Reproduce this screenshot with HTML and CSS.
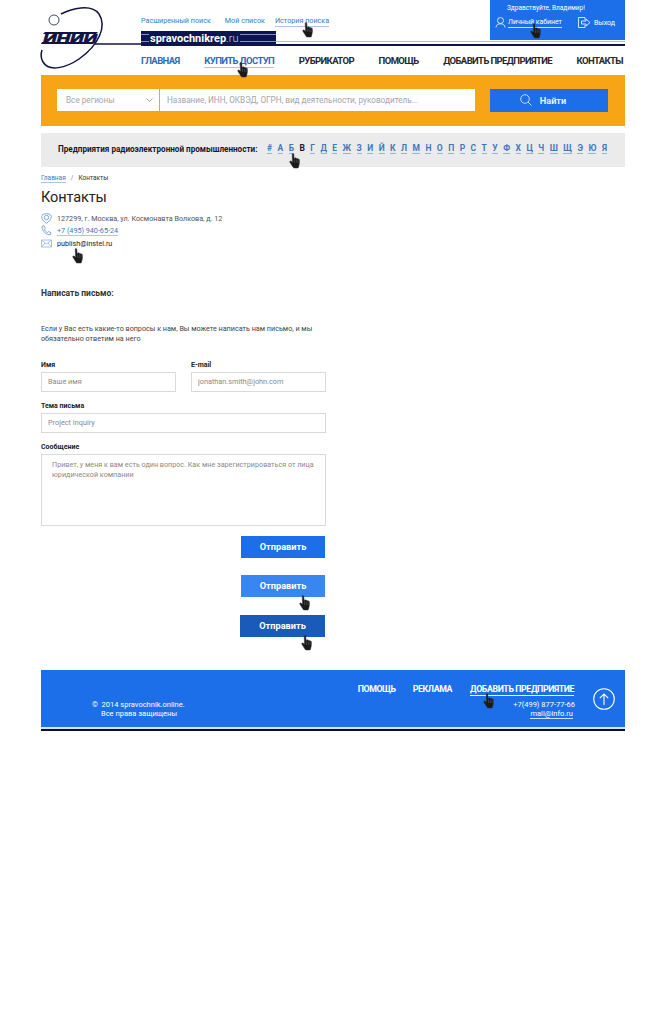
FILE: index.html
```html
<!DOCTYPE html>
<html>
<head>
    <title>Контакты</title>
    <link rel="stylesheet" href="styles.css">
</head>
<body>
    <svg class="sprite" width="0" height="0">
        <symbol id="hand" viewBox="0 0 12 16">
            <path d="M3.2 1.2c0-.9 1.5-.9 1.6 0l.3 4.3.5-.2c0-.8 1.3-.8 1.5 0l.1.4c.2-.7 1.3-.6 1.5.1l.1.5c.3-.6 1.4-.4 1.5.3.3 1.8.2 3.6-.2 5.2l-.7 2.6c-.1.4-.4.6-.8.6H5.100c-.4 0-.7-.2-.9-.5L.9 9.200c-.5-.7.4-1.700 1.200-1.100l1.400 1.200z" fill="#1a1a1a" stroke="#333" stroke-width=".5"/>
            <path d="M5.500 6.500V10M7.300 6.500V10M9.100 7V10" fill="none" stroke="#777" stroke-width=".4"/>
        </symbol>
    </svg>

    <div class="page">
        <header class="header">
            <a class="logo" href="#">
                <svg width="100" height="75" viewBox="0 0 100 75">
                    <path d="M20 14C30 9 50 3 58 14C66 26 58 45 38 59C25 68 8 72 2 62C-1 57 0 53 1 50" fill="none" stroke="#10143f" stroke-width="1.500"/>
                    <circle cx="13" cy="20" r="5" fill="none" stroke="#10143f" stroke-width=".8"/>
                    <path d="M4 32H57L55 34H2ZM1 42H54L52 44H0Z" fill="#10143f"/>
                    <text class="logo-text" x="2" y="43" textLength="54" lengthAdjust="spacingAndGlyphs">ИНИИ</text>
                    <path d="M54 44H100" stroke="#10143f" stroke-width="1.500"/>
                </svg>
            </a>

            <div class="head-main">
                <div class="head-top">
                    <div class="top-links">
                        <a class="top-link-first" href="#">Расширенный поиск</a>
                        <a href="#">Мой список</a>
                        <a class="underlined" href="#">История поиска</a>
                    </div>
                    <div class="user-box">
                        <div class="user-hello">Здравствуйте, Владимир!</div>
                        <div class="user-row">
                            <svg width="11" height="11" viewBox="0 0 11 11" fill="none" stroke="#fff" stroke-width=".8">
                                <circle cx="5.500" cy="3.500" r="3"/>
                                <path d="M1 10.500C1 8 3 6.800 5.500 6.800S10 8 10 10.500"/>
                            </svg>
                            <a class="user-cabinet" href="#">Личный кабинет</a>
                            <svg class="exit-icon" width="13" height="11" viewBox="0 0 13 11" fill="none" stroke="#fff" stroke-width=".8">
                                <path d="M7 3V.5H.5v10H7V8M3.500 4H8V2l4 3.500L8 9V7H3.500z"/>
                            </svg>
                            <a href="#">Выход</a>
                        </div>
                    </div>
                </div>

                <div class="brand">
                    <span class="brand-stripes brand-stripes-left"></span>
                    <span class="brand-name">spravochnikrep<span class="brand-zone">.ru</span></span>
                    <span class="brand-stripes"></span>
                </div>

                <div class="head-rule"></div>

                <nav class="main-nav">
                    <a class="nav-blue" href="#">ГЛАВНАЯ</a>
                    <a class="nav-blue underlined" href="#">КУПИТЬ ДОСТУП</a>
                    <a href="#">РУБРИКАТОР</a>
                    <a href="#">ПОМОЩЬ</a>
                    <a href="#">ДОБАВИТЬ ПРЕДПРИЯТИЕ</a>
                    <a href="#">КОНТАКТЫ</a>
                </nav>
            </div>
        </header>

        <!-- Search -->
        <form class="search-bar">
            <div class="region-select">
                <span>Все регионы</span>
                <svg width="7" height="4" viewBox="0 0 7 4" fill="none" stroke="#8a8f96" stroke-width=".8"><path d="M.5.5l3 3 3-3"/></svg>
            </div>
            <input class="search-input" type="text" placeholder="Название, ИНН, ОКВЭД, ОГРН, вид деятельности, руководитель...">
            <button class="search-button" type="button">
                <svg width="12" height="12" viewBox="0 0 12 12" fill="none" stroke="#d5e4fb" stroke-width=".9"><circle cx="5" cy="5" r="4.300"/><path d="M8 8l3.500 3.500"/></svg>
                Найти
            </button>
        </form>

        <!-- Alphabet -->
        <div class="alpha-bar">
            <strong class="alpha-title">Предприятия радиоэлектронной промышленности:</strong>
            <div class="alpha-list">
                <a href="#">#</a><a href="#">А</a><a href="#">Б</a><a class="current" href="#">В</a><a href="#">Г</a><a href="#">Д</a><a href="#">Е</a><a href="#">Ж</a><a href="#">З</a><a href="#">И</a><a href="#">Й</a><a href="#">К</a><a href="#">Л</a><a href="#">М</a><a href="#">Н</a><a href="#">О</a><a href="#">П</a><a href="#">Р</a><a href="#">С</a><a href="#">Т</a><a href="#">У</a><a href="#">Ф</a><a href="#">Х</a><a href="#">Ц</a><a href="#">Ч</a><a href="#">Ш</a><a href="#">Щ</a><a href="#">Э</a><a href="#">Ю</a><a href="#">Я</a>
            </div>
        </div>

        <div class="breadcrumbs"><a href="#">Главная</a><span class="crumb-sep">/</span>Контакты</div>

        <h1>Контакты</h1>

        <ul class="contacts">
            <li>
                <svg width="11" height="11" viewBox="0 0 11 11" fill="none" stroke="#5d92d0" stroke-width=".8"><path d="M5.500.7C8 .7 10.300 1.500 10.300 3.500 10.300 6.500 7.500 9 5.500 10.300 3.500 9 .7 6.500.7 3.500.7 1.500 3 .7 5.500.7z"/><circle cx="5.500" cy="4.500" r="2.200"/></svg>
                127299, г. Москва, ул. Космонавта Волкова, д. 12
            </li>
            <li>
                <svg width="11" height="11" viewBox="0 0 11 11" fill="none" stroke="#5d92d0" stroke-width=".8"><path d="M1 1.500L3 .7l1.300 2.500-1 1c.5 1.500 1.700 2.700 3.200 3.300l1-1 2.500 1.300-.8 2C5 10 1 6 1 1.500z"/></svg>
                <a class="underlined" href="#">+7 (495) 940-65-24</a>
            </li>
            <li>
                <svg width="11" height="9" viewBox="0 0 11 9" fill="none" stroke="#8fb4df" stroke-width=".8"><path d="M.5 1h10v7H.5zM.5 1l5 4 5-4M.5 8l3.500-4M10.500 8L7 4"/></svg>
                <span class="contact-mail">publish@instel.ru</span>
            </li>
        </ul>

        <h2>Написать письмо:</h2>

        <p class="intro">Если у Вас есть какие-то вопросы к нам, Вы можете написать нам письмо, и мы обязательно ответим на него</p>

        <form class="mail-form">
            <div class="field">
                <label for="name">Имя</label>
                <input type="text" id="name" placeholder="Ваше имя">
            </div>
            <div class="field">
                <label for="email">E-mail</label>
                <input type="text" id="email" value="jonathan.smith@john.com">
            </div>
            <div class="field field-wide">
                <label for="subject">Тема письма</label>
                <input type="text" id="subject" value="Project Inquiry">
            </div>
            <div class="field field-wide">
                <label for="message">Сообщение</label>
                <textarea id="message">Привет, у меня к вам есть один вопрос. Как мне зарегистрироваться от лица юридической компании</textarea>
            </div>
            <div class="form-buttons">
                <button class="send-button" type="button">Отправить</button>
                <button class="send-button send-hover" type="button">Отправить</button>
                <button class="send-button send-active" type="button">Отправить</button>
            </div>
        </form>

        <footer class="footer">
            <div class="copyright">
                <div>©&nbsp; 2014 spravochnik.online.</div>
                <div class="copyright-rights">Все права защищены</div>
            </div>
            <div class="footer-right">
                <div class="footer-nav">
                    <a href="#">ПОМОЩЬ</a>
                    <a href="#">РЕКЛАМА</a>
                    <a class="footer-add" href="#">ДОБАВИТЬ ПРЕДПРИЯТИЕ</a>
                </div>
                <div class="footer-phone">+7(499) 877-77-66</div>
                <a class="footer-mail" href="#">mail@info.ru</a>
            </div>
            <a class="to-top" href="#">
                <svg width="22" height="22" viewBox="0 0 22 22" fill="none" stroke="#fff" stroke-width="1.100"><circle cx="11" cy="11" r="10.300"/><path d="M11 17V6M6.800 10.200L11 6l4.200 4.200"/></svg>
            </a>
        </footer>
        <div class="footer-rule"></div>

        <!-- Hand cursors drawn over the mockup -->
        <svg class="hand hand-history"><use href="#hand"/></svg>
        <svg class="hand hand-buy"><use href="#hand"/></svg>
        <svg class="hand hand-cabinet"><use href="#hand"/></svg>
        <svg class="hand hand-alpha"><use href="#hand"/></svg>
        <svg class="hand hand-mail"><use href="#hand"/></svg>
        <svg class="hand hand-hover"><use href="#hand"/></svg>
        <svg class="hand hand-active"><use href="#hand"/></svg>
        <svg class="hand hand-footer"><use href="#hand"/></svg>
    </div>
</body>
</html>
```

FILE: styles.css
```css
body {
    margin: 0;
    background-color: #fff;
    font-family: Roboto, "Liberation Sans", sans-serif;
    color: #2b2b2b;
}

a {
    color: inherit;
    text-decoration: none;
}

.sprite {
    position: absolute;
}

.page {
    position: relative;
    width: 584px;
    margin-left: 41px;
}

.underlined {
    border-bottom: 1px solid #a9c5e8;
}

/* Header */
.header {
    display: flex;
    height: 75px;
}

.logo {
    flex: none;
    width: 100px;
    height: 75px;
}

.logo svg {
    display: block;
    overflow: visible;
}

.logo-text {
    font-family: "Liberation Sans", sans-serif;
    font-size: 13px;
    font-weight: 700;
    font-style: italic;
    fill: #10143f;
    stroke: #10143f;
    stroke-width: .7px;
}

.head-main {
    position: relative;
    flex: 1;
}

.head-top {
    display: flex;
    justify-content: space-between;
    height: 40px;
}

.top-links {
    display: flex;
    align-items: flex-start;
    gap: 10px;
    padding-top: 16px;
    font-size: 7.2px;
    line-height: 10px;
    color: #3f78bd;
}

.top-link-first {
    margin-right: 4px;
}

.user-box {
    box-sizing: border-box;
    width: 135px;
    padding: 4px 9px 0 5px;
    background-color: #1c6fe9;
    color: #fff;
    font-size: 7px;
}

.user-hello {
    padding-left: 12px;
    font-size: 6.5px;
    line-height: 9px;
}

.user-row {
    display: flex;
    align-items: center;
    margin-top: 4px;
    line-height: 10px;
}

.user-cabinet {
    margin-left: 2px;
    border-bottom: 1px solid #cfe0fa;
    letter-spacing: -.05px;
}

.exit-icon {
    margin: 0 3px 0 16px;
}

.brand {
    position: absolute;
    left: 0;
    top: 31px;
    display: flex;
    align-items: center;
    width: 135px;
    height: 14px;
    background-color: #0d1550;
    color: #fff;
}

.brand-stripes {
    flex: 1;
    height: 6px;
    border-top: 1px solid #7e8fc4;
    border-bottom: 1px solid #7e8fc4;
}

.brand-stripes-left {
    flex: none;
    width: 8px;
    margin-right: 1px;
}

.brand-name {
    margin-right: 2px;
    font-size: 11px;
    font-weight: 700;
}

.brand-zone {
    font-weight: 300;
    color: #c9d2ee;
}

.head-rule {
    height: 2px;
    margin-top: 1px;
    border-top: 1px solid #a9bfdc;
    border-bottom: 2px solid #10143f;
}

.main-nav {
    display: flex;
    justify-content: space-between;
    padding: 9px 2px 0 0;
    font-size: 9.5px;
    line-height: 12px;
    font-weight: 700;
    letter-spacing: -.6px;
    color: #25282c;
}

.nav-blue {
    color: #2b6cb5;
}

/* Search */
.search-bar {
    display: flex;
    align-items: flex-start;
    height: 51px;
    box-sizing: border-box;
    padding: 14px 17px 0 16px;
    margin: 0;
    background-color: #f7a416;
}

.region-select {
    box-sizing: border-box;
    display: flex;
    align-items: center;
    justify-content: space-between;
    width: 102px;
    height: 22px;
    padding: 0 6px 0 9px;
    background-color: #fff;
    font-size: 8.2px;
    color: #a2a6ab;
}

.search-input {
    box-sizing: border-box;
    width: 315px;
    height: 22px;
    margin: 0 15px 0 1px;
    padding: 0 7px;
    border: none;
    background-color: #fff;
    font-family: inherit;
    font-size: 8.2px;
}

.search-input::placeholder {
    color: #a2a6ab;
    opacity: 1;
}

.search-button {
    display: flex;
    align-items: center;
    justify-content: center;
    gap: 8px;
    flex: 1;
    height: 23px;
    padding: 0 12px 1px 0;
    border: none;
    background-color: #1c6fe9;
    color: #e8f0fd;
    font-family: inherit;
    font-size: 9.2px;
    font-weight: 700;
}

/* Alphabet */
.alpha-bar {
    display: flex;
    align-items: center;
    box-sizing: border-box;
    height: 34px;
    margin-top: 7px;
    padding: 0 0 2px 17px;
    background-color: #ebebeb;
}

.alpha-title {
    flex: none;
    width: 209px;
    font-size: 8.15px;
    color: #14182e;
}

.alpha-list {
    display: flex;
    justify-content: space-between;
    width: 340px;
    font-size: 8.5px;
    font-weight: 700;
    color: #3f78bd;
}

.alpha-list a {
    border-bottom: 1px solid #8fb2df;
    line-height: 9px;
}

.alpha-list .current {
    border-bottom: none;
    color: #14182e;
}

/* Content */
.breadcrumbs {
    margin-top: 7px;
    font-size: 6.5px;
    line-height: 9px;
    color: #333;
}

.breadcrumbs a {
    border-bottom: 1px solid #a9c5e8;
    color: #3f78bd;
}

.crumb-sep {
    margin: 0 5px;
    color: #888;
}

h1 {
    margin: 5px 0 0;
    font-size: 14.5px;
    line-height: 20px;
    font-weight: 400;
    letter-spacing: -.1px;
    color: #222;
}

.contacts {
    margin: 4px 0 0;
    padding: 0;
    list-style: none;
    font-size: 7.2px;
    color: #555;
}

.contacts li {
    display: flex;
    align-items: center;
    gap: 5px;
    height: 12.5px;
}

.contacts a {
    color: #3f78bd;
}

.contact-mail {
    color: #222;
}

h2 {
    margin: 37px 0 0;
    font-size: 8.5px;
    line-height: 12px;
    font-weight: 700;
    color: #333;
}

.intro {
    width: 280px;
    margin: 25px 0 0;
    font-size: 7.2px;
    line-height: 10.500px;
    color: #444;
}

/* Form */
.mail-form {
    display: grid;
    grid-template-columns: 135px 135px;
    column-gap: 15px;
    row-gap: 9px;
    width: 285px;
    margin-top: 15px;
}

.field-wide {
    grid-column: 1 / 3;
}

.field label {
    display: block;
    height: 12px;
    font-size: 7px;
    line-height: 10px;
    font-weight: 700;
    color: #222;
}

.field input,
.field textarea {
    display: block;
    box-sizing: border-box;
    width: 100%;
    height: 20px;
    padding: 0 6px;
    border: 1px solid #d9d9d9;
    border-radius: 0;
    outline: none;
    font-family: inherit;
    font-size: 7.3px;
    color: #8a8a8a;
}

.field input::placeholder {
    color: #8a8a8a;
    opacity: 1;
}

.field textarea {
    height: 72px;
    padding: 5px 8px 5px 10px;
    font-size: 7.2px;
    line-height: 10.500px;
    resize: none;
}

.form-buttons {
    grid-column: 1 / 3;
    display: flex;
    flex-direction: column;
    align-items: flex-end;
    gap: 17px;
    padding-top: 1px;
}

.send-button {
    width: 84px;
    height: 22px;
    margin-right: 1px;
    padding: 0;
    border: none;
    background-color: #1c6fe9;
    color: #fff;
    font-family: inherit;
    font-size: 9.2px;
    font-weight: 700;
}

.send-hover {
    background-color: #3a86f0;
}

.send-active {
    width: 85px;
    margin-top: 1px;
    background-color: #1a5bb8;
}

/* Footer */
.footer {
    display: flex;
    box-sizing: border-box;
    height: 57px;
    margin-top: 33px;
    background-color: #1c6fe9;
    color: #fff;
}

.copyright {
    flex: 1;
    padding: 30px 0 0 51px;
    font-size: 7.5px;
    line-height: 9px;
}

.copyright-rights {
    padding-left: 9px;
}

.footer-right {
    padding-top: 14px;
    font-size: 7.5px;
    line-height: 9px;
    text-align: right;
}

.footer-nav {
    display: flex;
    gap: 17px;
    margin: 0 1px 4px 0;
    font-size: 8.8px;
    line-height: 11px;
    font-weight: 700;
    letter-spacing: -.4px;
}

.footer-add {
    margin-left: 1px;
    border-bottom: 1px solid #fff;
}

.footer-mail {
    margin-right: 2px;
    border-bottom: 1px solid #cfe0fa;
}

.to-top {
    flex: none;
    width: 22px;
    height: 22px;
    margin: 18px 10px 0 18px;
}

.footer-rule {
    height: 2px;
    margin-top: 2px;
    background-color: #0b0f2a;
    box-shadow: 0 -2px 0 #dbe8fb;
}

/* Hand cursors */
.hand {
    position: absolute;
    width: 12px;
    height: 16px;
}

.hand-history { left: 261px; top: 22px; }
.hand-buy { left: 196px; top: 62px; }
.hand-cabinet { left: 489px; top: 23px; }
.hand-alpha { left: 248px; top: 153px; }
.hand-mail { left: 31px; top: 248px; }
.hand-hover { left: 258px; top: 595px; }
.hand-active { left: 260px; top: 635px; }
.hand-footer { left: 442px; top: 693px; }
```
